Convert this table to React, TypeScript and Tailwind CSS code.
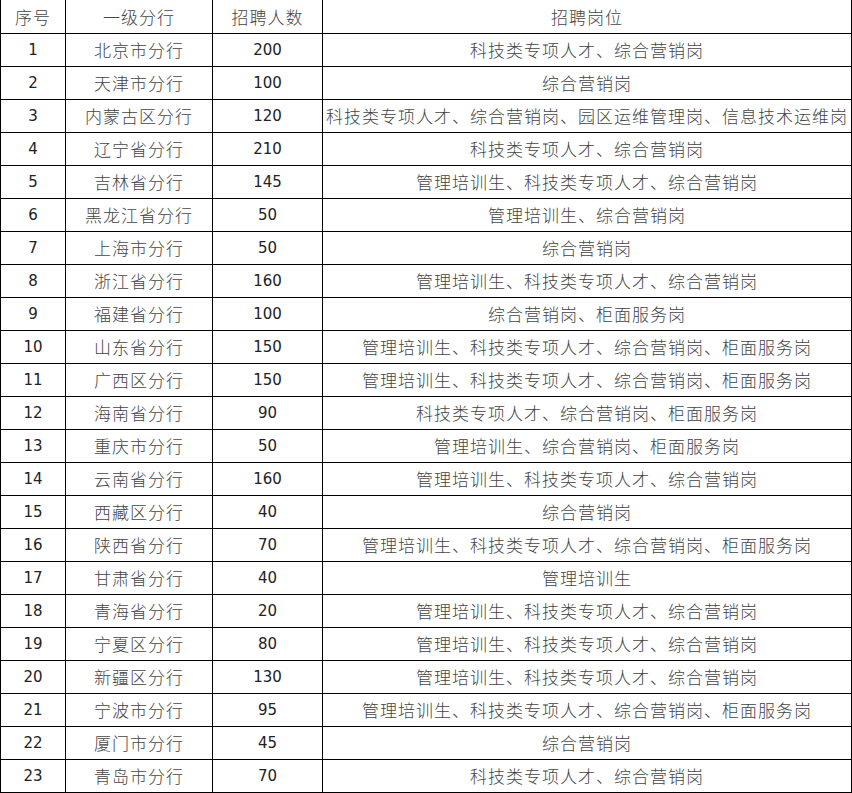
const rows: [string, string, string][] = [
  ['北京市分行', '200', '科技类专项人才、综合营销岗'],
  ['天津市分行', '100', '综合营销岗'],
  ['内蒙古区分行', '120', '科技类专项人才、综合营销岗、园区运维管理岗、信息技术运维岗'],
  ['辽宁省分行', '210', '科技类专项人才、综合营销岗'],
  ['吉林省分行', '145', '管理培训生、科技类专项人才、综合营销岗'],
  ['黑龙江省分行', '50', '管理培训生、综合营销岗'],
  ['上海市分行', '50', '综合营销岗'],
  ['浙江省分行', '160', '管理培训生、科技类专项人才、综合营销岗'],
  ['福建省分行', '100', '综合营销岗、柜面服务岗'],
  ['山东省分行', '150', '管理培训生、科技类专项人才、综合营销岗、柜面服务岗'],
  ['广西区分行', '150', '管理培训生、科技类专项人才、综合营销岗、柜面服务岗'],
  ['海南省分行', '90', '科技类专项人才、综合营销岗、柜面服务岗'],
  ['重庆市分行', '50', '管理培训生、综合营销岗、柜面服务岗'],
  ['云南省分行', '160', '管理培训生、科技类专项人才、综合营销岗'],
  ['西藏区分行', '40', '综合营销岗'],
  ['陕西省分行', '70', '管理培训生、科技类专项人才、综合营销岗、柜面服务岗'],
  ['甘肃省分行', '40', '管理培训生'],
  ['青海省分行', '20', '管理培训生、科技类专项人才、综合营销岗'],
  ['宁夏区分行', '80', '管理培训生、科技类专项人才、综合营销岗'],
  ['新疆区分行', '130', '管理培训生、科技类专项人才、综合营销岗'],
  ['宁波市分行', '95', '管理培训生、科技类专项人才、综合营销岗、柜面服务岗'],
  ['厦门市分行', '45', '综合营销岗'],
  ['青岛市分行', '70', '科技类专项人才、综合营销岗'],
];

const cjk = "font-['Noto_Sans_CJK_SC',sans-serif] font-light text-[17px] tracking-[1px] text-[#444]";
const num = "font-['DejaVu_Sans',sans-serif] text-[15px] text-[#222]";
const cell = 'flex items-center justify-center border-r border-black whitespace-nowrap';

function Row({ cols, header }: { cols: [string, string, string, string]; header?: boolean }) {
  return (
    <div className={header ? 'flex h-[34px] border-b border-l border-black' : 'flex h-[33px] border-b border-l border-black'}>
      <div className={`${cell} w-[65px] ${header ? cjk : num}`}>{cols[0]}</div>
      <div className={`${cell} w-[147px] ${cjk}`}>{cols[1]}</div>
      <div className={`${cell} w-[110px] ${header ? cjk : num}`}>{cols[2]}</div>
      <div className={`${cell} w-[529px] ${cjk}`}>{cols[3]}</div>
    </div>
  );
}

export default function App() {
  return (
    <div className="h-[793px] w-[852px] overflow-hidden bg-white">
      <Row header cols={['序号', '一级分行', '招聘人数', '招聘岗位']} />
      {rows.map((r, i) => (
        <Row key={i} cols={[String(i + 1), r[0], r[1], r[2]]} />
      ))}
    </div>
  );
}
